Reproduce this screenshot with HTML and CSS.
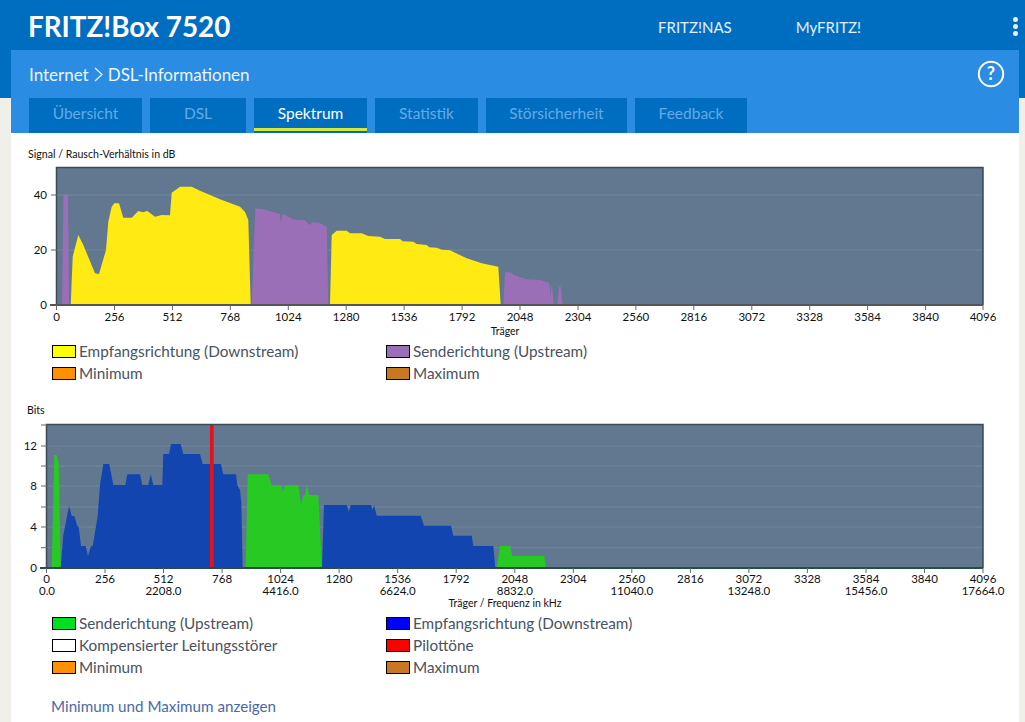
FILE: index.html
```html
<!DOCTYPE html>
<html lang="de">
<head>
<meta charset="utf-8">
<title>FRITZ!Box 7520</title>
<link rel="stylesheet" href="styles.css">
</head>
<body>
<header class="masthead">
  <div class="brand">FRITZ!Box 7520</div>
  <nav class="topnav"><a class="nas">FRITZ!NAS</a><a class="myfritz">MyFRITZ!</a></nav>
  <div class="dots"><i></i><i></i><i></i></div>
</header>
<main class="page">
  <div class="subhead">
    <div class="crumbs">
      <span>Internet</span>
      <svg class="chev" viewBox="0 0 9 15"><path d="M1 1l7 6.5-7 6.5"/></svg>
      <span>DSL-Informationen</span>
      <svg class="help" viewBox="0 0 28 28"><circle cx="14" cy="14" r="12.2"/><text x="14" y="20.2">?</text></svg>
    </div>
    <div class="tabs">
      <a class="tab t1">Übersicht</a>
      <a class="tab t2">DSL</a>
      <a class="tab t3 active">Spektrum</a>
      <a class="tab t4">Statistik</a>
      <a class="tab t5">Störsicherheit</a>
      <a class="tab t6">Feedback</a>
    </div>
  </div>
  <section class="content">
    <p class="ctitle first">Signal / Rausch-Verhältnis in dB</p>
    <svg class="chart c1" viewBox="11 161 1008 177">
      <rect class="plot" x="56.5" y="167.5" width="926.5" height="137.5"/>
      <path class="grid" d="M57 195H983M57 250H983"/>
      <polygon class="purple" points="62,305 63.5,195 68,195 69,305"/>
      <polygon class="yellow" points="70.7,305 72.7,256.7 78.3,235 83.3,245 95,273.3 99,274 106,250 108.3,221.7 111.7,206.7 114.3,203.3 119,203.3 123.3,217.7 131.7,217.7 138.3,211 142.7,212.3 147.3,211 155,216.7 161.7,215 170,215.3 171.7,192.7 180,186.7 191.7,186.7 200,190.7 220,199.3 240,206.7 245,212 248.3,220 250.7,305"/>
      <polygon class="purple" points="251.7,305 255.3,208.3 263.3,209.3 280,214 280.7,223.3 282.7,214 293.3,219.3 300,220 305,220 309.3,225 313.3,222 319.3,222.7 326.7,226.7 328.3,305"/>
      <polygon class="yellow" points="330,305 331.7,235 336.7,230.7 346.7,230.7 350,233.3 361.7,233.3 368.3,236 380,236.7 385,239 400,239 402.7,241.3 413.3,241.7 416.7,244 426.7,245 429.3,247.3 436.7,247.7 441.7,249.7 450,250.3 466.7,258.3 481.7,263.3 498.3,266.7 500.7,305"/>
      <polygon class="purple" points="503.3,305 505,272 511.7,272.7 513.3,275 526.7,279.3 540,280 549.3,282.7 550.7,295 551.7,283.3 554,305 557.3,305 559,286.7 560.7,286.7 562.7,305"/>
      <path class="frame" d="M56.5 305V167.5H983V305"/>
      <path class="axis" d="M50 305H983"/>
      <path class="tick" d="M56.5 305v5M114.5 305v5M172.4 305v5M230.3 305v5M288.3 305v5M346.2 305v5M404.1 305v5M462.1 305v5M520 305v5M578 305v5M635.9 305v5M693.8 305v5M751.8 305v5M809.7 305v5M867.6 305v5M925.6 305v5M983 305v5M51 250h6M51 195h6"/>
      <g class="ylab"><text x="47" y="309">0</text><text x="47" y="254">20</text><text x="47" y="199">40</text></g>
      <g class="xlab">
        <text x="56.5" y="321">0</text><text x="114.5" y="321">256</text><text x="172.4" y="321">512</text><text x="230.3" y="321">768</text><text x="288.3" y="321">1024</text><text x="346.2" y="321">1280</text><text x="404.1" y="321">1536</text><text x="462.1" y="321">1792</text><text x="520" y="321">2048</text><text x="578" y="321">2304</text><text x="635.9" y="321">2560</text><text x="693.8" y="321">2816</text><text x="751.8" y="321">3072</text><text x="809.7" y="321">3328</text><text x="867.6" y="321">3584</text><text x="925.6" y="321">3840</text><text x="983" y="321">4096</text>
      </g>
      <text class="xname" x="505" y="335">Träger</text>
    </svg>
    <div class="legend spaced">
      <div class="item"><span class="sw yel"></span>Empfangsrichtung (Downstream)</div>
      <div class="item"><span class="sw pur"></span>Senderichtung (Upstream)</div>
      <div class="item"><span class="sw org"></span>Minimum</div>
      <div class="item"><span class="sw brn"></span>Maximum</div>
    </div>
    <p class="ctitle">Bits</p>
    <svg class="chart c2" viewBox="11 417 1008 195">
      <rect class="plot" x="46.5" y="424.5" width="936.5" height="143.5"/>
      <path class="grid" d="M47 547.7H983M47 527H983M47 507H983M47 486H983M47 466H983M47 446H983"/>
      <polygon class="green" points="51.7,568 54.3,455 56.7,455 58.7,463 60.7,568"/>
      <polygon class="blue" points="60.7,568 63.3,535 69,506 71.7,516 74.3,516 77.3,526 78.7,526.7 81,546 85.7,546 88,556 91,546 92.7,546 97.7,516 100,485 103.3,464 109.3,464 113.3,485 125.3,485 127.3,474.3 140,474.3 142.3,485 148.3,485 150.7,474.3 153.3,485 162.3,485 163.3,454 169,454 171,444 180.7,444 183.3,454 200,454 202.7,464 221,464 223.3,474.3 236,474.3 237.3,485 240,490 241.3,503 242.7,568"/>
      <polygon class="green" points="245.7,568 247.7,474.3 268.3,474.3 271.7,485 281.7,485 282.7,491.7 285,485 298.3,485 301,505 303.3,495 305,495 306.7,485 309.3,495 318.3,495 322,568"/>
      <polygon class="blue" points="322,568 324,505 346.7,505 349,511.7 350.7,505 371,505 372.7,510 374,505 376.7,515.7 420.7,515.7 424,525.7 451,525.7 453.3,535.7 471.7,535.7 473.3,546 493.3,546 495.3,568"/>
      <polygon class="green" points="496.7,568 500,546 510,546 512.3,556 544.3,556 546,568"/>
      <rect class="red" x="210" y="424" width="3.7" height="144"/>
      <path class="frame" d="M46.5 568V424.5H983V568"/>
      <path class="axis dk" d="M40 568H983"/>
      <path class="tick" d="M46.5 568v5M105 568v5M163.5 568v5M222.1 568v5M280.6 568v5M339.1 568v5M397.7 568v5M456.2 568v5M514.8 568v5M573.3 568v5M631.8 568v5M690.4 568v5M748.9 568v5M807.4 568v5M866 568v5M924.5 568v5M983 568v5M41 547.7h6M41 527h6M41 507h6M41 486h6M41 466h6M41 446h6M41 425h6"/>
      <g class="ylab"><text x="37" y="572">0</text><text x="37" y="531">4</text><text x="37" y="490">8</text><text x="37" y="450">12</text></g>
      <g class="xlab">
        <text x="46.5" y="583">0</text><text x="105" y="583">256</text><text x="163.5" y="583">512</text><text x="222.1" y="583">768</text><text x="280.6" y="583">1024</text><text x="339.1" y="583">1280</text><text x="397.7" y="583">1536</text><text x="456.2" y="583">1792</text><text x="514.8" y="583">2048</text><text x="573.3" y="583">2304</text><text x="631.8" y="583">2560</text><text x="690.4" y="583">2816</text><text x="748.9" y="583">3072</text><text x="807.4" y="583">3328</text><text x="866" y="583">3584</text><text x="924.5" y="583">3840</text><text x="983" y="583">4096</text>
        <text x="47" y="595">0.0</text><text x="163.5" y="595">2208.0</text><text x="280.6" y="595">4416.0</text><text x="397.7" y="595">6624.0</text><text x="514.8" y="595">8832.0</text><text x="631.8" y="595">11040.0</text><text x="748.9" y="595">13248.0</text><text x="866" y="595">15456.0</text><text x="983" y="595">17664.0</text>
      </g>
      <text class="xname" x="505" y="607">Träger / Frequenz in kHz</text>
    </svg>
    <div class="legend">
      <div class="item"><span class="sw grn"></span>Senderichtung (Upstream)</div>
      <div class="item"><span class="sw blu"></span>Empfangsrichtung (Downstream)</div>
      <div class="item"><span class="sw wht"></span>Kompensierter Leitungsstörer</div>
      <div class="item"><span class="sw rd"></span>Pilottöne</div>
      <div class="item"><span class="sw org"></span>Minimum</div>
      <div class="item"><span class="sw brn"></span>Maximum</div>
    </div>
    <a class="toggle">Minimum und Maximum anzeigen</a>
  </section>
</main>
</body>
</html>
```
FILE: styles.css
```css
html, body { margin: 0; height: 722px; overflow: hidden; }
body {
  font-family: "Lato", "Liberation Sans", sans-serif;
  background: linear-gradient(#006ec0 98px, #f1efe9 98px);
  color: #4a5260;
}
.masthead { height: 50px; box-sizing: border-box; padding: 3px 0 0 28px; display: flex; align-items: center; color: #fff; }
.brand { font-size: 27.8px; font-weight: 700; width: 630px; }
.topnav { display: flex; gap: 64px; font-size: 15px; color: #e4f1fc; }
.dots { margin-left: auto; margin-right: 7px; display: flex; flex-direction: column; gap: 2px; }
.dots i { width: 5px; height: 5px; border-radius: 50%; background: #e8f3fc; display: block; }
.page { margin: 0 6px 0 11px; background: #fff; height: 672px; }
.subhead { background: #2a8ce2; height: 83px; display: flex; flex-direction: column; }
.crumbs { height: 48px; display: flex; align-items: center; padding: 0 14px 0 18px; color: #eef6fd; font-size: 17px; gap: 5px; }
.chev { width: 9px; height: 15px; fill: none; stroke: #eef6fd; stroke-width: 1.2; }
.help { width: 28px; height: 28px; margin-left: auto; margin-top: -1px; }
.help circle { fill: none; stroke: #fff; stroke-width: 2; }
.help text { fill: #fff; font-size: 18px; font-weight: 700; text-anchor: middle; font-family: "Lato", sans-serif; }
.tabs { display: flex; gap: 8px; padding-left: 18px; height: 35px; }
.tab { background: #006ec0; color: #64aae6; font-size: 15.5px; height: 30px; padding-top: 5px; display: flex; justify-content: center; line-height: 20px; }
.t1 { width: 113px; }
.t2 { width: 96px; }
.t3 { width: 113px; }
.t4 { width: 103px; }
.t5 { width: 141px; }
.t6 { width: 112px; }
.tab.active { color: #fff; height: 25px; border-bottom: 3px solid #d6e83a; box-shadow: 0 2px 0 #006ec0; }
.content { display: flex; flex-direction: column; }
.ctitle { margin: 20px 0 0 16px; font-size: 10.6px; line-height: 13px; color: #111; height: 13px; }
.ctitle.first { margin: 15px 0 0 17px; }
.chart { display: block; width: 1008px; }
.c1 { height: 177px; }
.c2 { height: 195px; }
.chart text { font-family: "Lato", sans-serif; fill: #111; font-size: 11.5px; }
.plot { fill: #617890; }
.grid { stroke: #72879a; stroke-width: 1; fill: none; }
.frame { fill: none; stroke: #3c4a55; stroke-width: 1.5; }
.axis { stroke: #555; stroke-width: 2; fill: none; }
.axis.dk { stroke: #264d44; }
.tick { stroke: #666; stroke-width: 1; fill: none; }
.yellow { fill: #ffea14; }
.purple { fill: #9b6fb8; }
.blue { fill: #1245b0; }
.green { fill: #27c923; }
.red { fill: #e2131f; }
.ylab text { text-anchor: end; }
.xlab text { text-anchor: middle; }
.chart .xname { text-anchor: middle; font-size: 10.5px; }
.legend { display: grid; grid-template-columns: 334px 1fr; padding-left: 41px; }
.legend.spaced { margin-top: 2px; }
.item { display: flex; align-items: center; height: 22px; font-size: 15.3px; gap: 3px; white-space: nowrap; }
.sw { width: 22px; height: 11px; border: 1px solid #000; display: block; }
.yel { background: #ffff00; }
.pur { background: #9b6fb8; }
.org { background: #ff9000; }
.brn { background: #c87820; }
.grn { background: #00e020; }
.blu { background: #0000ff; }
.wht { background: #fff; }
.rd { background: #ff0000; }
.toggle { margin: 17px 0 0 40px; font-size: 15.2px; line-height: 22px; color: #4a6aa5; }
```
